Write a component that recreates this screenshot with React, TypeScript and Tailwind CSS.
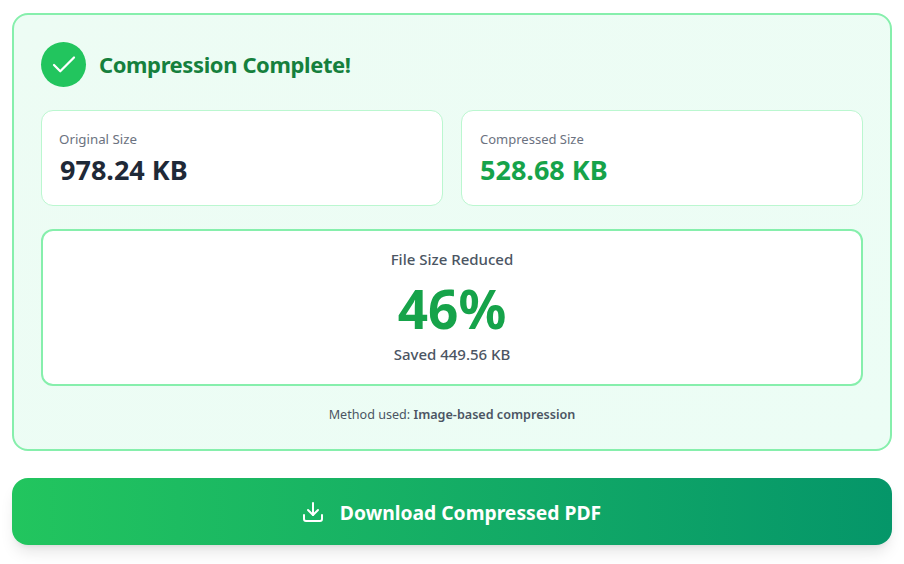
import { Check, Download } from "lucide-react";

export default function App() {
  return (
    <div className="min-h-[564px] bg-white px-3 pt-[13px] font-['Noto_Sans','Open_Sans',sans-serif]">
      <div className="rounded-2xl border-2 border-[#86efac] bg-gradient-to-br from-[#edfcf4] to-[#ecfdf5] px-[27px] pt-[27px] pb-[25px]">
        <div className="flex items-center gap-[13px]">
          <div className="flex h-[45px] w-[45px] items-center justify-center rounded-full bg-[#22c55e]">
            <Check className="h-[30px] w-[30px] text-white" strokeWidth={1.8} />
          </div>
          <h2 className="-mt-0.5 text-[22px] leading-[30px] font-bold tracking-[-0.4px] text-[#15803d]">Compression Complete!</h2>
        </div>
        <div className="mt-[23px] grid grid-cols-2 gap-[18px]">
          <div className="h-[96px] rounded-xl border border-[#bbf7d0] bg-white px-[18px] pt-[18px]">
            <p className="-ml-px text-[13.3px] leading-[20px] text-[#6b7280]">Original Size</p>
            <p className="mt-[3px] text-[27px] leading-[36px] font-bold text-[#1f2937]">978.24 KB</p>
          </div>
          <div className="h-[96px] rounded-xl border border-[#bbf7d0] bg-white px-[18px] pt-[18px]">
            <p className="text-[13px] leading-[20px] text-[#6b7280]">Compressed Size</p>
            <p className="mt-[3px] text-[27px] leading-[36px] font-bold text-[#16a34a]">528.68 KB</p>
          </div>
        </div>
        <div className="mt-[23px] flex h-[157px] flex-col items-center rounded-xl border-2 border-[#86efac] bg-white pt-[18px]">
          <p className="text-[15px] leading-[20px] font-medium text-[#4b5563]">File Size Reduced</p>
          <p className="mt-[10px] text-[53px] leading-[60px] font-bold text-[#16a34a]">46%</p>
          <p className="mt-[5px] text-[15px] leading-[20px] font-medium text-[#4b5563]">Saved 449.56 KB</p>
        </div>
        <p className="mt-5 text-center text-[12.6px] leading-[18px] text-[#4b5563]">
          Method used: <span className="font-semibold">Image-based compression</span>
        </p>
      </div>
      <button className="mt-[27px] flex h-[67px] w-full items-center justify-center gap-[15px] rounded-2xl bg-gradient-to-r from-[#22c55e] to-[#059669] pr-[2px] text-[19.3px] font-bold text-white shadow-lg">
        <Download className="h-6 w-6" strokeWidth={2} />
        <span className="mt-[3px]">Download Compressed PDF</span>
      </button>
    </div>
  );
}
